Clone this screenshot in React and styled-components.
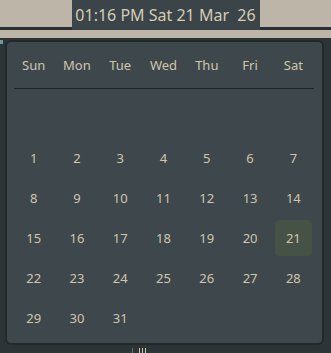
import React from 'react'
import styled, { createGlobalStyle } from 'styled-components'

const Global = createGlobalStyle`
  html, body {
    margin: 0;
    padding: 0;
    background: #2c3437;
    font-family: 'Noto Sans', 'Open Sans', sans-serif;
  }
`

const Screen = styled.div`
  width: 331px;
  height: 353px;
  display: flex;
  flex-direction: column;
  overflow: hidden;
  background: #2c3437;
`

const TopBar = styled.div`
  flex-shrink: 0;
  height: 30px;
  display: flex;
  justify-content: center;
  background: linear-gradient(#bdb6a8 0 27px, #283033 27px);
`

const Clock = styled.div`
  width: 188px;
  display: flex;
  align-items: center;
  justify-content: center;
  background: #3b4549;
  color: #d6ccb4;
  font-size: 16px;
  white-space: pre;
  padding-bottom: 1px;
`

const Shelf = styled.div`
  flex-shrink: 0;
  height: 8px;
  background: #bdb6a8;
`

const Desktop = styled.div`
  flex: 1;
  display: flex;
  flex-direction: column;
  padding: 2px 7px 0 5px;
  background: linear-gradient(90deg, #6f9a9a 0 3px, transparent 3px) no-repeat 0 2px / 100% 4px, #2c3437;
`

const Popup = styled.div`
  flex-shrink: 0;
  height: 305px;
  box-sizing: border-box;
  border: 2px solid #22292b;
  border-radius: 6px;
  background: #3e484c;
  padding: 10px 7px 0 5px;
  display: flex;
  flex-direction: column;
`

const Grid = styled.div`
  display: grid;
  grid-template-columns: repeat(7, 1fr);
  grid-auto-rows: 40px;
`

const HeadRow = styled(Grid)`
  grid-auto-rows: 26px;
`

const Rule = styled.div`
  height: 1px;
  background: #1f2527;
  margin: 10px 1px 9px 2px;
`

const Cell = styled.div`
  display: flex;
  align-items: center;
  justify-content: center;
  color: #d0c5ad;
  font-size: 13px;
  margin: 2px 3px;
  border-radius: 5px;
  background: ${p => (p.$today ? '#475246' : 'transparent')};
`

const Footer = styled.div`
  height: 8px;
  display: flex;
  align-items: flex-end;
  justify-content: center;
  gap: 2px;
  padding-right: 52px;
`

const Tick = styled.span`
  width: 1px;
  height: 5px;
  background: ${p => (p.$dim ? '#6a6e6c' : '#d0c5ad')};
  margin-right: ${p => (p.$dim ? '4px' : '0')};
`

const days = ['Sun', 'Mon', 'Tue', 'Wed', 'Thu', 'Fri', 'Sat']

export default function App() {
  const cells = []
  for (let i = 0; i < 7; i++) cells.push(null)
  for (let d = 1; d <= 31; d++) cells.push(d)

  return (
    <Screen>
      <Global />
      <TopBar>
        <Clock>01:16 PM Sat 21 Mar  26</Clock>
      </TopBar>
      <Shelf />
      <Desktop>
        <Popup>
          <HeadRow>
            {days.map(d => (
              <Cell key={d}>{d}</Cell>
            ))}
          </HeadRow>
          <Rule />
          <Grid>
            {cells.map((d, i) => (
              <Cell key={i} $today={d === 21}>
                {d}
              </Cell>
            ))}
          </Grid>
        </Popup>
        <Footer>
          <Tick $dim />
          <Tick />
          <Tick />
          <Tick />
        </Footer>
      </Desktop>
    </Screen>
  )
}
